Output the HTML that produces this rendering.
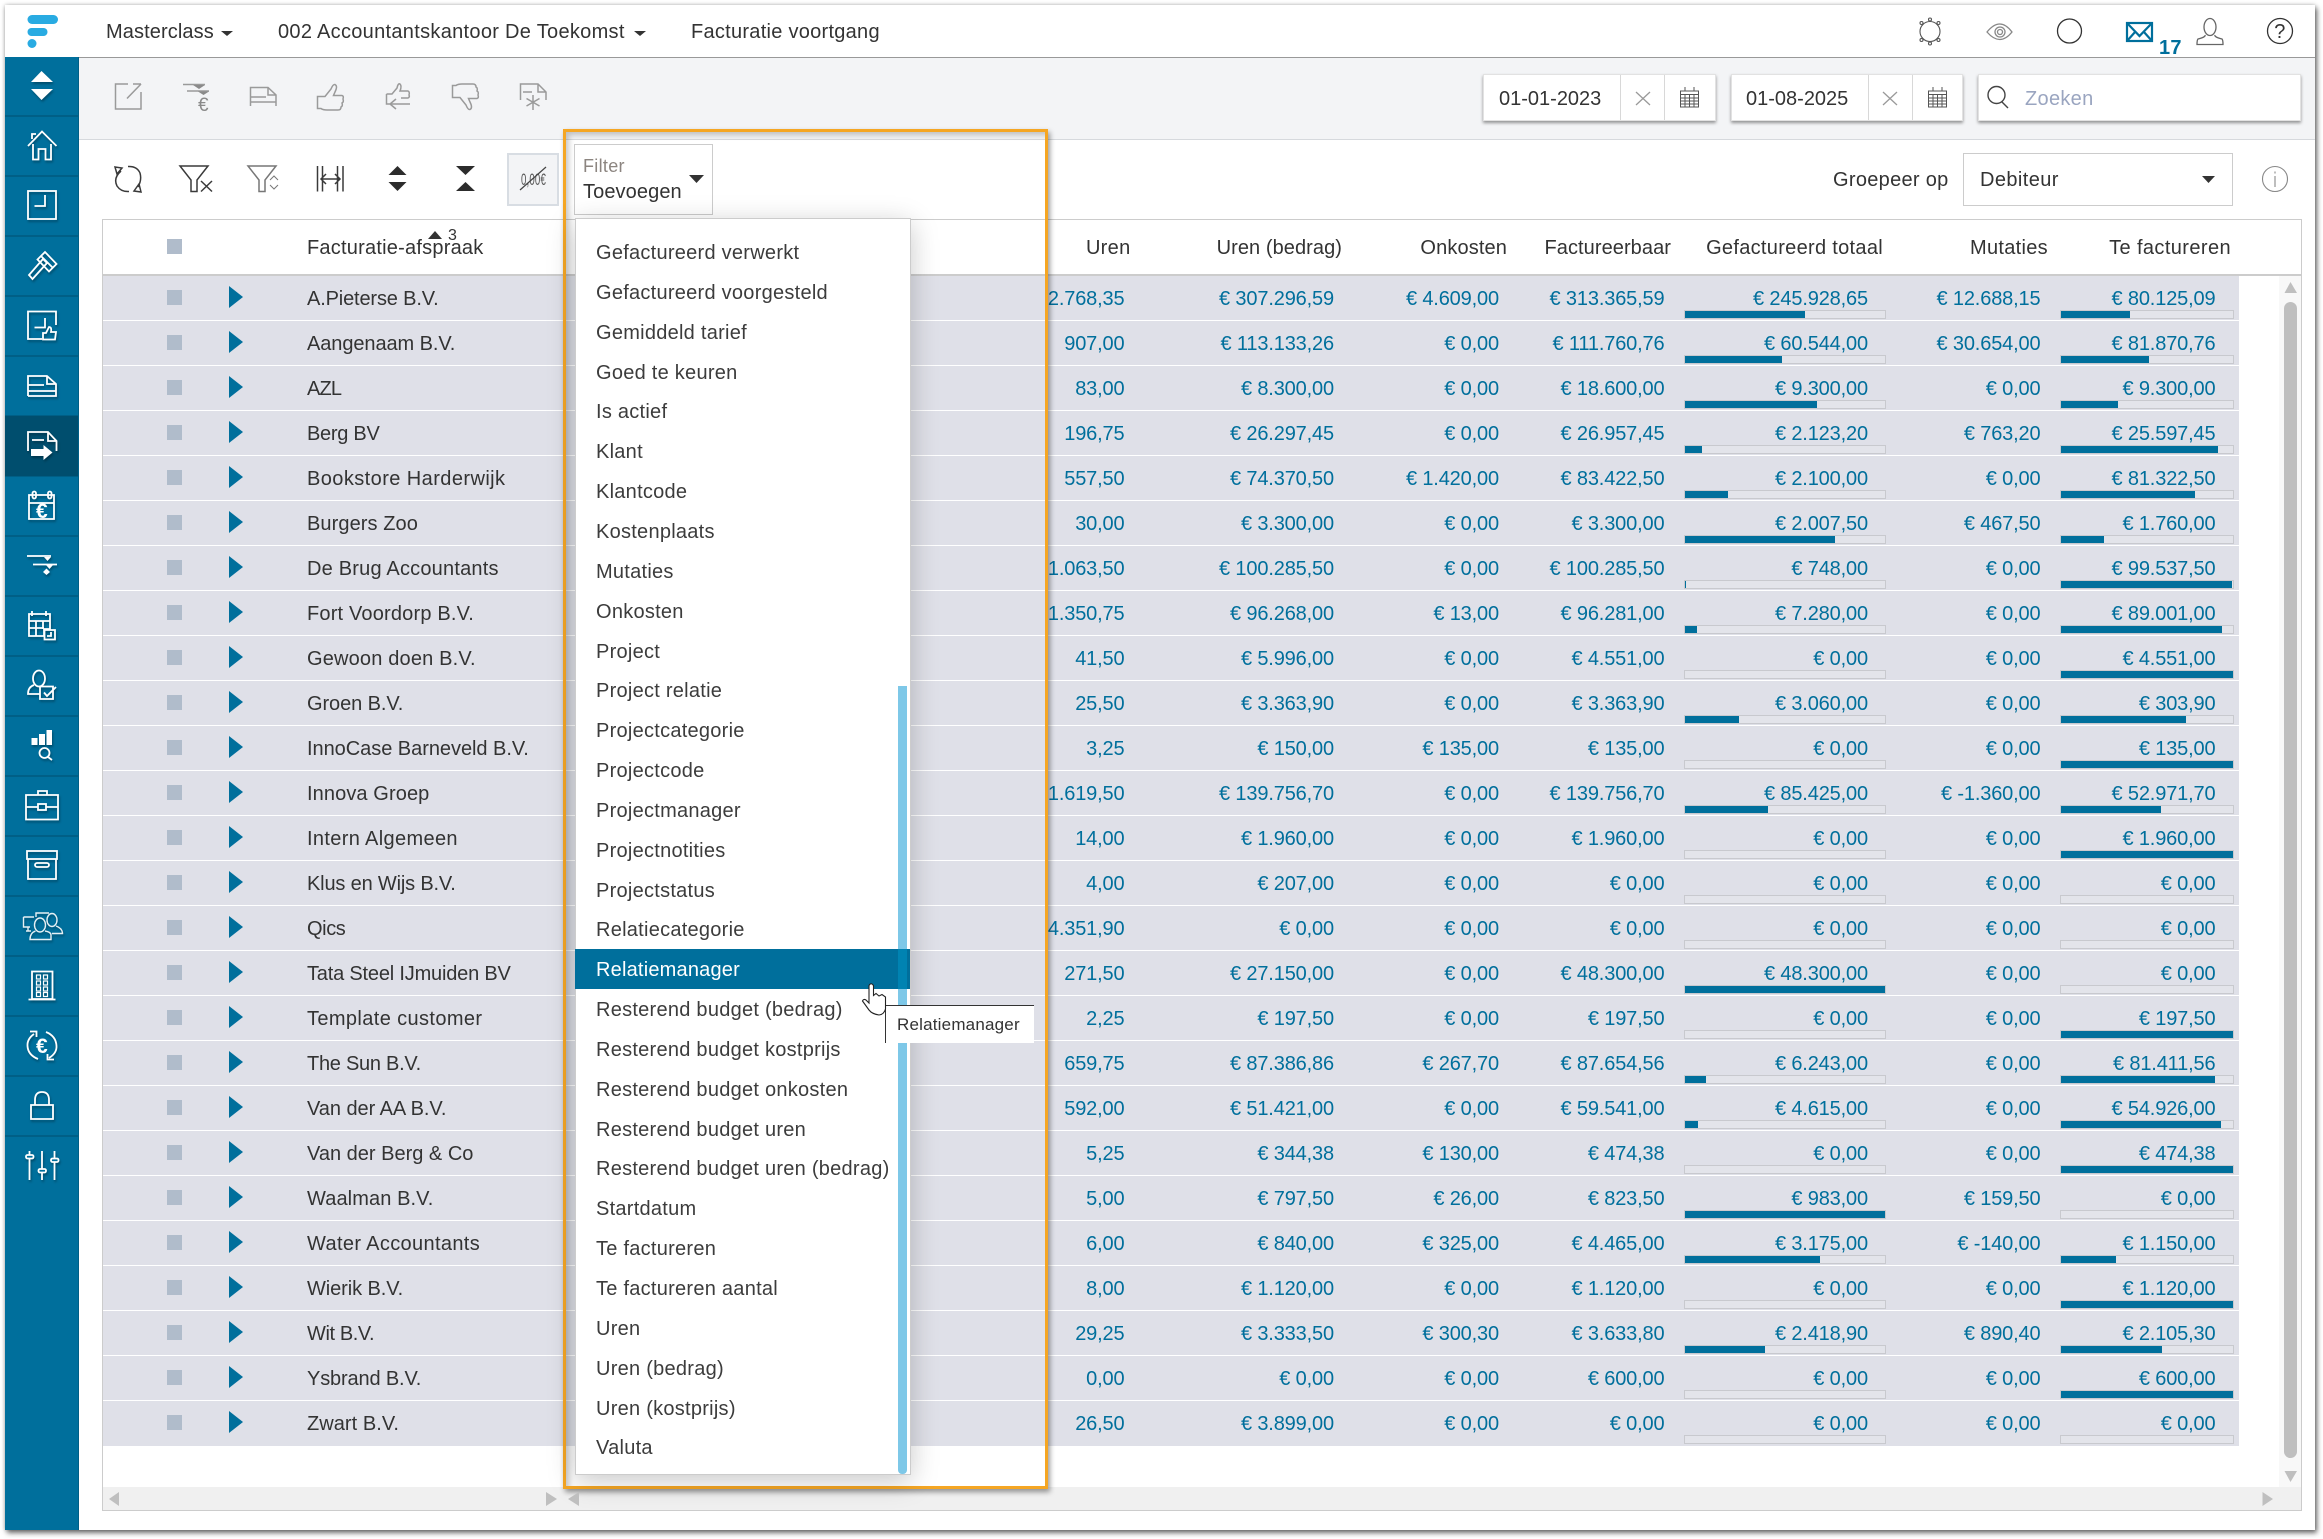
<!DOCTYPE html>
<html><head><meta charset="utf-8"><title>Facturatie voortgang</title>
<style>
*{box-sizing:border-box}
html,body{margin:0;padding:0;width:2323px;height:1539px;background:#fff;overflow:hidden;font:20px/24px "Liberation Sans",sans-serif;color:#333;letter-spacing:.3px}
.x{position:absolute;white-space:nowrap}
#win{position:absolute;left:5px;top:5px;width:2310px;height:1525px;background:#fff;box-shadow:2px 3px 5px rgba(0,0,0,.55),0 0 4px rgba(0,0,0,.25)}
#side{position:absolute;left:5px;top:57px;width:74px;height:1473px;background:#006f9c;border-right:1px solid #005f86}
#side i{position:absolute;left:0;width:73px;height:2px;background:#005f86}
#act{position:absolute;left:5px;top:416px;width:73px;height:60px;background:#004e6e}
#tb{position:absolute;left:79px;top:57px;width:2236px;height:83px;background:#f3f4f6;border-top:1px solid #999;border-bottom:1px solid #d6d9dd}
.inp{position:absolute;top:74px;height:47px;background:#fff;border:1px solid #e2e2e2;box-shadow:0 2px 3px rgba(0,0,0,.4)}
.inp i{position:absolute;top:0;width:1px;height:45px;background:#d8d8d8}
#tbl{position:absolute;left:102px;top:219px;width:2200px;height:1292px;border:1.5px solid #ccc;background:#fff}
#hl{position:absolute;left:103px;top:274px;width:2198px;height:2px;background:#ccc}
.h{position:absolute;top:236px;white-space:nowrap}
.r{position:absolute;left:103px;width:2136px;height:45px;background:#dfe0e8;border-bottom:1px solid #fff;color:#006f9c;letter-spacing:-.15px}
.r>span{position:absolute;top:10.5px;white-space:nowrap}
.c{position:absolute;left:64px;top:14px;width:15px;height:15px;background:#b0bccb}
.p{position:absolute;left:126px;top:10px;width:0;height:0;border-left:14px solid #006f9c;border-top:11.5px solid transparent;border-bottom:11.5px solid transparent}
.r>.n{left:204px;color:#333;letter-spacing:.35px}
.r>.u{left:944px;width:77.5px;display:flex;justify-content:flex-end;overflow:hidden}
.r>.b{right:905px}.r>.o{right:740px}.r>.f{right:574.5px}.r>.g{right:371px}.r>.m{right:198.5px}.r>.t{right:23.5px}
.bg,.bt{position:absolute;top:34px;height:9px;border:1px solid #c8c9ce;background:#e3e4ea}
.bg{left:1581px;width:202px}.bt{left:1957px;width:174px}
.bg div,.bt div{height:100%;background:#006f9c}
#vs{position:absolute;left:2279px;top:276px;width:22px;height:1211px;background:#f8f8f8}
#hs{position:absolute;left:103px;top:1487px;width:2198px;height:23px;background:#f0f0f0}
#frame{position:absolute;left:563px;top:129px;width:485px;height:1360px;border:3px solid #f5a623;box-shadow:2px 3px 5px rgba(0,0,0,.4),inset 5px 5px 6px -2px rgba(0,0,0,.22)}
#filt{position:absolute;left:574px;top:144px;width:139px;height:71px;border:1.5px solid #ccc;background:#fff}
#dd{position:absolute;left:575px;top:218px;width:336px;height:1257px;background:#fff;border:1.5px solid #ccc;box-shadow:0 6px 26px rgba(0,0,0,.22)}
#dd div{position:absolute;left:20px;white-space:nowrap;letter-spacing:.26px;color:#3c3c3c}
#sel{position:absolute;left:575px;top:949px;width:335px;height:40px;background:#006f9c}
#sel b{position:absolute;left:323px;top:0;width:9px;height:40px;background:#0083b2}
#sel span{position:absolute;left:21px;top:9px;color:#fff;letter-spacing:.2px}
#sb{position:absolute;left:898px;top:686px;width:9px;height:788px;background:#7ec8e8;border-radius:0 0 4px 4px}
#tip{position:absolute;left:885px;top:1005px;width:149px;height:38px;background:#fff;border-top:1.5px solid #333;border-left:1.5px solid #333;font-size:17px;letter-spacing:.2px;padding:7px 0 0 11px}
svg{position:absolute;left:0;top:0}
</style></head><body>
<div id="win"></div>
<div id="tb"></div>
<div class="x" style="left:106px;top:20px;letter-spacing:.1px">Masterclass</div>
<div class="x" style="left:278px;top:20px">002 Accountantskantoor De Toekomst</div>
<div class="x" style="left:691px;top:20px;letter-spacing:.27px">Facturatie voortgang</div>

<div class="inp" style="left:1483px;width:233px"><i style="left:136px"></i><i style="left:180px"></i></div>
<div class="x" style="left:1499px;top:87px;letter-spacing:0">01-01-2023</div>
<div class="inp" style="left:1731px;width:232px"><i style="left:136px"></i><i style="left:180px"></i></div>
<div class="x" style="left:1746px;top:87px;letter-spacing:0">01-08-2025</div>
<div class="inp" style="left:1978px;width:323px"></div>
<div class="x" style="left:2025px;top:87px;color:#9aa5c0">Zoeken</div>

<div class="x" style="left:1833px;top:168px">Groepeer op</div>
<div class="x" style="left:1963px;top:153px;width:270px;height:53px;border:1.5px solid #ccc;background:#fff"></div>
<div class="x" style="left:1980px;top:168px;letter-spacing:.4px">Debiteur</div>
<div class="x" style="left:507px;top:153px;width:52px;height:53px;background:#f3f4f6;border:2px solid #d8dde3"></div>

<div id="tbl"></div><div id="hl"></div>
<div class="c" style="left:167px;top:239px"></div>
<div class="h" style="left:307px;letter-spacing:.22px">Facturatie-afspraak</div>
<div class="h" style="right:1192.500px">Uren</div>
<div class="h" style="right:981px;letter-spacing:.07px">Uren (bedrag)</div>
<div class="h" style="right:816px;letter-spacing:.12px">Onkosten</div>
<div class="h" style="right:652px;letter-spacing:.07px">Factureerbaar</div>
<div class="h" style="right:440px">Gefactureerd totaal</div>
<div class="h" style="right:275px">Mutaties</div>
<div class="h" style="right:92px;letter-spacing:.4px">Te factureren</div>
<div class="x" style="left:448px;top:228px;font-size:16px;line-height:16px">3</div>

<div class="r" style="top:276px"><i class="c"></i><i class="p"></i><span class="n" style="letter-spacing:-.15px">A.Pieterse B.V.</span><span class="u">2.768,35</span><span class="b">€ 307.296,59</span><span class="o">€ 4.609,00</span><span class="f">€ 313.365,59</span><span class="g">€ 245.928,65</span><span class="m">€ 12.688,15</span><span class="t">€ 80.125,09</span><div class="bg"><div style="width:60%"></div></div><div class="bt"><div style="width:40%"></div></div></div>
<div class="r" style="top:321px"><i class="c"></i><i class="p"></i><span class="n" style="letter-spacing:-.08px">Aangenaam B.V.</span><span class="u">907,00</span><span class="b">€ 113.133,26</span><span class="o">€ 0,00</span><span class="f">€ 111.760,76</span><span class="g">€ 60.544,00</span><span class="m">€ 30.654,00</span><span class="t">€ 81.870,76</span><div class="bg"><div style="width:48.5%"></div></div><div class="bt"><div style="width:51%"></div></div></div>
<div class="r" style="top:366px"><i class="c"></i><i class="p"></i><span class="n" style="letter-spacing:-.85px">AZL</span><span class="u">83,00</span><span class="b">€ 8.300,00</span><span class="o">€ 0,00</span><span class="f">€ 18.600,00</span><span class="g">€ 9.300,00</span><span class="m">€ 0,00</span><span class="t">€ 9.300,00</span><div class="bg"><div style="width:66%"></div></div><div class="bt"><div style="width:33%"></div></div></div>
<div class="r" style="top:411px"><i class="c"></i><i class="p"></i><span class="n" style="letter-spacing:-.28px">Berg BV</span><span class="u">196,75</span><span class="b">€ 26.297,45</span><span class="o">€ 0,00</span><span class="f">€ 26.957,45</span><span class="g">€ 2.123,20</span><span class="m">€ 763,20</span><span class="t">€ 25.597,45</span><div class="bg"><div style="width:8.7%"></div></div><div class="bt"><div style="width:91%"></div></div></div>
<div class="r" style="top:456px"><i class="c"></i><i class="p"></i><span class="n" style="letter-spacing:.42px">Bookstore Harderwijk</span><span class="u">557,50</span><span class="b">€ 74.370,50</span><span class="o">€ 1.420,00</span><span class="f">€ 83.422,50</span><span class="g">€ 2.100,00</span><span class="m">€ 0,00</span><span class="t">€ 81.322,50</span><div class="bg"><div style="width:21.7%"></div></div><div class="bt"><div style="width:78%"></div></div></div>
<div class="r" style="top:501px"><i class="c"></i><i class="p"></i><span class="n" style="letter-spacing:.08px">Burgers Zoo</span><span class="u">30,00</span><span class="b">€ 3.300,00</span><span class="o">€ 0,00</span><span class="f">€ 3.300,00</span><span class="g">€ 2.007,50</span><span class="m">€ 467,50</span><span class="t">€ 1.760,00</span><div class="bg"><div style="width:75%"></div></div><div class="bt"><div style="width:25%"></div></div></div>
<div class="r" style="top:546px"><i class="c"></i><i class="p"></i><span class="n" style="letter-spacing:.2px">De Brug Accountants</span><span class="u">1.063,50</span><span class="b">€ 100.285,50</span><span class="o">€ 0,00</span><span class="f">€ 100.285,50</span><span class="g">€ 748,00</span><span class="m">€ 0,00</span><span class="t">€ 99.537,50</span><div class="bg"><div style="width:.5%"></div></div><div class="bt"><div style="width:99.4%"></div></div></div>
<div class="r" style="top:591px"><i class="c"></i><i class="p"></i><span class="n" style="letter-spacing:.18px">Fort Voordorp B.V.</span><span class="u">1.350,75</span><span class="b">€ 96.268,00</span><span class="o">€ 13,00</span><span class="f">€ 96.281,00</span><span class="g">€ 7.280,00</span><span class="m">€ 0,00</span><span class="t">€ 89.001,00</span><div class="bg"><div style="width:6%"></div></div><div class="bt"><div style="width:93.5%"></div></div></div>
<div class="r" style="top:636px"><i class="c"></i><i class="p"></i><span class="n" style="letter-spacing:.17px">Gewoon doen B.V.</span><span class="u">41,50</span><span class="b">€ 5.996,00</span><span class="o">€ 0,00</span><span class="f">€ 4.551,00</span><span class="g">€ 0,00</span><span class="m">€ 0,00</span><span class="t">€ 4.551,00</span><div class="bg"></div><div class="bt"><div style="width:100%"></div></div></div>
<div class="r" style="top:681px"><i class="c"></i><i class="p"></i><span class="n" style="letter-spacing:-.09px">Groen B.V.</span><span class="u">25,50</span><span class="b">€ 3.363,90</span><span class="o">€ 0,00</span><span class="f">€ 3.363,90</span><span class="g">€ 3.060,00</span><span class="m">€ 0,00</span><span class="t">€ 303,90</span><div class="bg"><div style="width:27%"></div></div><div class="bt"><div style="width:72.7%"></div></div></div>
<div class="r" style="top:726px"><i class="c"></i><i class="p"></i><span class="n" style="letter-spacing:-.04px">InnoCase Barneveld B.V.</span><span class="u">3,25</span><span class="b">€ 150,00</span><span class="o">€ 135,00</span><span class="f">€ 135,00</span><span class="g">€ 0,00</span><span class="m">€ 0,00</span><span class="t">€ 135,00</span><div class="bg"></div><div class="bt"><div style="width:100%"></div></div></div>
<div class="r" style="top:771px"><i class="c"></i><i class="p"></i><span class="n" style="letter-spacing:.1px">Innova Groep</span><span class="u">1.619,50</span><span class="b">€ 139.756,70</span><span class="o">€ 0,00</span><span class="f">€ 139.756,70</span><span class="g">€ 85.425,00</span><span class="m">€ -1.360,00</span><span class="t">€ 52.971,70</span><div class="bg"><div style="width:41.5%"></div></div><div class="bt"><div style="width:58%"></div></div></div>
<div class="r" style="top:816px"><i class="c"></i><i class="p"></i><span class="n">Intern Algemeen</span><span class="u">14,00</span><span class="b">€ 1.960,00</span><span class="o">€ 0,00</span><span class="f">€ 1.960,00</span><span class="g">€ 0,00</span><span class="m">€ 0,00</span><span class="t">€ 1.960,00</span><div class="bg"></div><div class="bt"><div style="width:100%"></div></div></div>
<div class="r" style="top:861px"><i class="c"></i><i class="p"></i><span class="n" style="letter-spacing:-.17px">Klus en Wijs B.V.</span><span class="u">4,00</span><span class="b">€ 207,00</span><span class="o">€ 0,00</span><span class="f">€ 0,00</span><span class="g">€ 0,00</span><span class="m">€ 0,00</span><span class="t">€ 0,00</span><div class="bg"></div><div class="bt"></div></div>
<div class="r" style="top:906px"><i class="c"></i><i class="p"></i><span class="n" style="letter-spacing:-.4px">Qics</span><span class="u">4.351,90</span><span class="b">€ 0,00</span><span class="o">€ 0,00</span><span class="f">€ 0,00</span><span class="g">€ 0,00</span><span class="m">€ 0,00</span><span class="t">€ 0,00</span><div class="bg"></div><div class="bt"></div></div>
<div class="r" style="top:951px"><i class="c"></i><i class="p"></i><span class="n" style="letter-spacing:-.19px">Tata Steel IJmuiden BV</span><span class="u">271,50</span><span class="b">€ 27.150,00</span><span class="o">€ 0,00</span><span class="f">€ 48.300,00</span><span class="g">€ 48.300,00</span><span class="m">€ 0,00</span><span class="t">€ 0,00</span><div class="bg"><div style="width:100%"></div></div><div class="bt"></div></div>
<div class="r" style="top:996px"><i class="c"></i><i class="p"></i><span class="n" style="letter-spacing:.38px">Template customer</span><span class="u">2,25</span><span class="b">€ 197,50</span><span class="o">€ 0,00</span><span class="f">€ 197,50</span><span class="g">€ 0,00</span><span class="m">€ 0,00</span><span class="t">€ 197,50</span><div class="bg"></div><div class="bt"><div style="width:100%"></div></div></div>
<div class="r" style="top:1041px"><i class="c"></i><i class="p"></i><span class="n" style="letter-spacing:-.27px">The Sun B.V.</span><span class="u">659,75</span><span class="b">€ 87.386,86</span><span class="o">€ 267,70</span><span class="f">€ 87.654,56</span><span class="g">€ 6.243,00</span><span class="m">€ 0,00</span><span class="t">€ 81.411,56</span><div class="bg"><div style="width:10.4%"></div></div><div class="bt"><div style="width:89.5%"></div></div></div>
<div class="r" style="top:1086px"><i class="c"></i><i class="p"></i><span class="n" style="letter-spacing:-.05px">Van der AA B.V.</span><span class="u">592,00</span><span class="b">€ 51.421,00</span><span class="o">€ 0,00</span><span class="f">€ 59.541,00</span><span class="g">€ 4.615,00</span><span class="m">€ 0,00</span><span class="t">€ 54.926,00</span><div class="bg"><div style="width:6.5%"></div></div><div class="bt"><div style="width:93%"></div></div></div>
<div class="r" style="top:1131px"><i class="c"></i><i class="p"></i><span class="n" style="letter-spacing:0">Van der Berg &amp; Co</span><span class="u">5,25</span><span class="b">€ 344,38</span><span class="o">€ 130,00</span><span class="f">€ 474,38</span><span class="g">€ 0,00</span><span class="m">€ 0,00</span><span class="t">€ 474,38</span><div class="bg"></div><div class="bt"><div style="width:100%"></div></div></div>
<div class="r" style="top:1176px"><i class="c"></i><i class="p"></i><span class="n" style="letter-spacing:.1px">Waalman B.V.</span><span class="u">5,00</span><span class="b">€ 797,50</span><span class="o">€ 26,00</span><span class="f">€ 823,50</span><span class="g">€ 983,00</span><span class="m">€ 159,50</span><span class="t">€ 0,00</span><div class="bg"><div style="width:100%"></div></div><div class="bt"></div></div>
<div class="r" style="top:1221px"><i class="c"></i><i class="p"></i><span class="n">Water Accountants</span><span class="u">6,00</span><span class="b">€ 840,00</span><span class="o">€ 325,00</span><span class="f">€ 4.465,00</span><span class="g">€ 3.175,00</span><span class="m">€ -140,00</span><span class="t">€ 1.150,00</span><div class="bg"><div style="width:67.6%"></div></div><div class="bt"><div style="width:32%"></div></div></div>
<div class="r" style="top:1266px"><i class="c"></i><i class="p"></i><span class="n" style="letter-spacing:-.09px">Wierik B.V.</span><span class="u">8,00</span><span class="b">€ 1.120,00</span><span class="o">€ 0,00</span><span class="f">€ 1.120,00</span><span class="g">€ 0,00</span><span class="m">€ 0,00</span><span class="t">€ 1.120,00</span><div class="bg"></div><div class="bt"><div style="width:100%"></div></div></div>
<div class="r" style="top:1311px"><i class="c"></i><i class="p"></i><span class="n" style="letter-spacing:-.4px">Wit B.V.</span><span class="u">29,25</span><span class="b">€ 3.333,50</span><span class="o">€ 300,30</span><span class="f">€ 3.633,80</span><span class="g">€ 2.418,90</span><span class="m">€ 890,40</span><span class="t">€ 2.105,30</span><div class="bg"><div style="width:40%"></div></div><div class="bt"><div style="width:59%"></div></div></div>
<div class="r" style="top:1356px"><i class="c"></i><i class="p"></i><span class="n" style="letter-spacing:-.15px">Ysbrand B.V.</span><span class="u">0,00</span><span class="b">€ 0,00</span><span class="o">€ 0,00</span><span class="f">€ 600,00</span><span class="g">€ 0,00</span><span class="m">€ 0,00</span><span class="t">€ 600,00</span><div class="bg"></div><div class="bt"><div style="width:100%"></div></div></div>
<div class="r" style="top:1401px;border-bottom:0"><i class="c"></i><i class="p"></i><span class="n" style="letter-spacing:.05px">Zwart B.V.</span><span class="u">26,50</span><span class="b">€ 3.899,00</span><span class="o">€ 0,00</span><span class="f">€ 0,00</span><span class="g">€ 0,00</span><span class="m">€ 0,00</span><span class="t">€ 0,00</span><div class="bg"></div><div class="bt"></div></div>

<div id="vs"></div>
<div class="x" style="left:2284px;top:302px;width:13px;height:1156px;background:#bfbfbf;border-radius:7px"></div>
<div id="hs"></div>

<div id="side">
<i style="top:58px"></i><i style="top:118px"></i><i style="top:178px"></i><i style="top:238px"></i><i style="top:298px"></i><i style="top:358px"></i><i style="top:418px"></i><i style="top:478px"></i><i style="top:538px"></i><i style="top:598px"></i><i style="top:658px"></i><i style="top:718px"></i><i style="top:778px"></i><i style="top:838px"></i><i style="top:898px"></i><i style="top:958px"></i><i style="top:1018px"></i><i style="top:1078px"></i>
</div>
<div id="act"></div>

<div id="frame"></div>
<div id="filt"></div>
<div class="x" style="left:583px;top:154px;font-size:18px;color:#8c8580">Filter</div>
<div class="x" style="left:583px;top:180px;letter-spacing:.1px">Toevoegen</div>
<div id="dd">
<div style="top:22px">Gefactureerd verwerkt</div>
<div style="top:62px">Gefactureerd voorgesteld</div>
<div style="top:102px">Gemiddeld tarief</div>
<div style="top:142px">Goed te keuren</div>
<div style="top:181px">Is actief</div>
<div style="top:221px">Klant</div>
<div style="top:261px">Klantcode</div>
<div style="top:301px">Kostenplaats</div>
<div style="top:341px">Mutaties</div>
<div style="top:381px">Onkosten</div>
<div style="top:421px">Project</div>
<div style="top:460px">Project relatie</div>
<div style="top:500px">Projectcategorie</div>
<div style="top:540px">Projectcode</div>
<div style="top:580px">Projectmanager</div>
<div style="top:620px">Projectnotities</div>
<div style="top:660px">Projectstatus</div>
<div style="top:699px">Relatiecategorie</div>
<div style="top:779px">Resterend budget (bedrag)</div>
<div style="top:819px">Resterend budget kostprijs</div>
<div style="top:859px">Resterend budget onkosten</div>
<div style="top:899px">Resterend budget uren</div>
<div style="top:938px">Resterend budget uren (bedrag)</div>
<div style="top:978px">Startdatum</div>
<div style="top:1018px">Te factureren</div>
<div style="top:1058px">Te factureren aantal</div>
<div style="top:1098px">Uren</div>
<div style="top:1138px">Uren (bedrag)</div>
<div style="top:1178px">Uren (kostprijs)</div>
<div style="top:1217px">Valuta</div>
</div>
<div id="sb"></div>
<div id="sel"><b></b><span>Relatiemanager</span></div>
<div id="tip">Relatiemanager</div>

<svg width="2323" height="1539" viewBox="0 0 2323 1539" xmlns="http://www.w3.org/2000/svg" font-family="Liberation Sans, sans-serif">
<!-- logo -->
<g fill="#29abe2"><rect x="27.5" y="15" width="30.5" height="9" rx="4.5"/><rect x="27.5" y="28" width="20" height="8" rx="4"/><rect x="27.5" y="39" width="9" height="9" rx="4.5"/></g>
<!-- carets -->
<g fill="#333"><path d="M221 31H233L227 36Z"/><path d="M634 31H646L640 36Z"/><path d="M689 175H704L696.5 183Z"/><path d="M2202 176H2215L2208.5 183Z"/><path d="M428 239H442L435 231Z"/></g>
<!-- top right -->
<g fill="none" stroke="#555" stroke-width="1.1">
<circle cx="1930" cy="31.5" r="10"/><g fill="#fff"><circle cx="1930" cy="19.5" r="1.5"/><circle cx="1930" cy="43.5" r="1.5"/><circle cx="1921.5" cy="23" r="1.5"/><circle cx="1938.5" cy="23" r="1.5"/><circle cx="1921.5" cy="40" r="1.5"/><circle cx="1938.5" cy="40" r="1.5"/></g>
<g stroke="#888" stroke-width="1.3"><path d="M1987 32Q2000 16 2012 32Q2000 47 1987 32Z"/><circle cx="2000" cy="32" r="5"/><circle cx="2000" cy="32" r="2.5"/></g>
<circle cx="2069.5" cy="31" r="12" stroke="#333" stroke-width="1.3"/>
<g stroke="#006f9c" stroke-width="2.2"><rect x="2127" y="23" width="25" height="18"/><path d="M2127 23L2139.5 36L2152 23M2127 41L2135.5 31.500M2152 41L2143.500 31.500"/></g>
<g stroke="#666" stroke-width="1.3"><ellipse cx="2210" cy="27" rx="6" ry="8.5"/><path d="M2205 35Q2206 37 2198 39Q2197 40 2197 44.500H2223Q2223 40 2222 39Q2214 37 2215 35"/></g>
<circle cx="2280" cy="31" r="12.500" stroke="#333" stroke-width="1.3"/>
<circle cx="2275" cy="179" r="12.500" stroke="#888"/><path d="M2275 176V187M2275 171.500V173.500" stroke="#888"/>
</g>
<text x="2159" y="54" font-size="20" font-weight="bold" fill="#006f9c">17</text>
<text x="2280" y="38" font-size="20" fill="#333" text-anchor="middle">?</text>
<!-- date icons -->
<g fill="none" stroke="#9a9a9a" stroke-width="1.3"><path d="M1636 92L1650 105M1650 92L1636 105M1883 92L1897 105M1897 92L1883 105"/></g>
<g fill="none" stroke="#555" stroke-width="1">
<path d="M1680.500 91H1698.500V107H1680.500ZM1680.500 94.500H1698.500M1680.500 98H1698.500M1680.500 101H1698.500M1680.500 104H1698.500M1685 94.500V107M1689.500 94.500V107M1694 94.500V107M1685 87V91M1694 87V91"/>
<path d="M1928.500 91H1946.500V107H1928.500ZM1928.500 94.500H1946.500M1928.500 98H1946.500M1928.500 101H1946.500M1928.500 104H1946.500M1933 94.500V107M1937.500 94.500V107M1942 94.500V107M1933 87V91M1942 87V91"/>
</g>
<g fill="none" stroke="#444" stroke-width="1.4"><circle cx="1996.500" cy="95" r="8.500"/><path d="M2002 102L2008 108"/></g>
<!-- toolbar 1 -->
<g fill="none" stroke="#9a9a9a" stroke-width="1.500">
<path d="M128 84H115.500V109H141V92M141 84L127 98.500M133 84H141"/>
<path d="M183 84.500H205M187 91H209"/><path d="M193 85L199 89L205 85Z M198 91.500L203.500 95L209 91.500Z" fill="#8a8a8a" stroke="none"/>
<path d="M250.500 106V87.500H268L276 95V106M268 87.500V95H276M250.500 97H266M250.500 102H276"/>
<path id="t" d="M317.500 96.500H325L331 89Q333 84 335 84.500Q338 86 335 92L333.500 95.500H342Q344 96 343 99Q344 102 342 103Q343 106 341 107Q341 110 338 110H327Q323 110 321 108.500H317.500Z"/>
<path d="M386.500 94H392L397 88Q398 83 400 84Q402 86 400 91H408Q410 92 409 95Q410 97 408 98H401M386.500 94V104H391M410 104H390M396 99L390 104L396 109"/>
<path d="M317.500 96.500H325L331 89Q333 84 335 84.500Q338 86 335 92L333.500 95.500H342Q344 96 343 99Q344 102 342 103Q343 106 341 107Q341 110 338 110H327Q323 110 321 108.500H317.500Z" transform="translate(135,194) scale(1,-1)"/>
<path d="M520.500 100V84H538L546 92V100M538 84V92H546M523 92H532M533 95V110M526.500 98.500L539.500 106M539.500 98.500L526.500 106"/>
</g>
<text x="198" y="111" font-size="19" fill="#8a8a8a">€</text>
<!-- toolbar 2 -->
<g fill="none" stroke="#3a3a3a" stroke-width="1.500">
<path d="M121 171Q113 178 117 186Q121 192 129 191.500M128 166.500Q137 166 140 173Q142 180 138 187"/>
<path d="M115 167L122 168L117 174ZM141 192L134 191L139 184Z"/>
<path d="M180 166H208L197 180V191.500H191V180ZM201 181L212 191.500M212 181L201 191.500"/>
<g stroke="#777"><path d="M248 166H276L265 180V191.500H259V180Z"/><path d="M270 180L274 176L278 180M270 185L274 189L278 185" stroke-width="1"/></g>
<path d="M317.500 166V191.500M322.500 166V191.500M337.500 166V191.500M343 166V191.500M321 179H340M326 174L321 179L326 184M335 174L340 179L335 184"/>
</g>
<g fill="#2c2c2c"><path d="M397.500 166L388.500 175H406.500ZM388.500 182H406.500L397.500 191ZM456 166H475L465.500 175ZM465.500 182L456 191H475Z"/></g>
<text x="521" y="185" font-size="17" fill="#555" textLength="25" lengthAdjust="spacingAndGlyphs">0,00€</text>
<path d="M520 190L546 167" stroke="#444" stroke-width="1.200"/>
<!-- sidebar -->
<g fill="none" stroke="#fff" stroke-width="1.800" style="filter:drop-shadow(1px 2px 1px rgba(0,0,0,.3))">
<path d="M41.500 71L31 82H53ZM31 89H53L41.500 100Z" fill="#fff" stroke="none"/>
<path d="M28 146L42 131.500L56.500 146M33 144V159.500H38.500V149H45.500V159.500H51V144M32 139V134H36"/>
<rect x="28" y="191" width="28" height="28"/><path d="M45 195V206H34.500"/>
<path d="M29 275L32.500 279L47 263L43 259ZM37.500 259.500L45 252L56.500 264L49 271.500ZM41 256L53 268"/>
<path d="M56 325V311.500H28V339H42M45 318V327.500H34.500M43 339.500V333H46L49 327Q52 327 51 332H56L55 339.500Z"/>
<path d="M28 396V376H47L56 384V396H28M47 376V384H56M28 385H44M28 391H56"/>
<path d="M28 451V432H48L56.500 441V451M48 432V441H56.500M32 440H44"/>
<path d="M31 449H43.500V445L52.500 452.500L43.500 460V456H31Z" fill="#fff" stroke="none"/>
<path d="M29 495H54V519H29ZM29 503H54" /><rect x="32.500" y="491.500" width="3.500" height="7" rx="1.700"/><rect x="48" y="491.500" width="3.500" height="7" rx="1.700"/>
<path d="M27 556H51M33 564.500H57"/><path d="M44 557H51L47.500 561ZM46 565H53L49.500 569ZM46.500 568.500L50 572L46.500 575L43 572Z" fill="#fff" stroke="none"/>
<path d="M29 614H50V629H44V636H29ZM29 621H50M29 628H44M36 621V636M43 621V629M32 611V616M46 611V616M44.500 630H55V639.500H44.500ZM51 632V636H47"/>
<ellipse cx="39" cy="678.500" rx="6" ry="8"/><path d="M34 685Q28 687 28 694H40M40 686.500H53V699H40ZM44 692.500L47 696L56 687"/>
<path d="M31.500 738H37.500V745H31.500ZM39 734H45V745H39ZM46.500 730H52V745H46.500Z" fill="#fff" stroke="none"/>
<circle cx="44.500" cy="753" r="5"/><path d="M48 757L52 760"/>
<path d="M26 795H58V819.500H26ZM26 807H38M46 807H58M38 795V791H47V795"/><rect x="38" y="804" width="8" height="6"/>
<rect x="27" y="851" width="30" height="8"/><path d="M28 859V879H56V859"/><rect x="35" y="863" width="14" height="4" rx="2"/>
<g stroke-width="1.400" opacity=".9"><path d="M23.500 917H34M23.500 917V927H30M28 927V931M26 931H31M36 917V913H49"/><ellipse cx="40" cy="925" rx="5.500" ry="7"/><path d="M35.500 931Q30 933 30 939.500H51V935Q51 932 45 931"/><ellipse cx="52" cy="920" rx="5" ry="6.500"/><path d="M56 926Q62 928 62.500 933V933.500H52"/></g>
<path d="M32 971.500H52.500V999H32ZM28.500 999.500H55.500"/><g stroke-width="1.200"><rect x="36.500" y="975" width="4" height="4"/><rect x="43.500" y="975" width="4" height="4"/><rect x="36.500" y="981" width="4" height="4"/><rect x="43.500" y="981" width="4" height="4"/><rect x="36.500" y="987" width="4" height="4"/><rect x="43.500" y="987" width="4" height="4"/><rect x="36.500" y="992.500" width="4" height="4"/><rect x="43.500" y="992.500" width="4" height="4"/></g>
<path d="M34 1034Q27 1039 27.500 1046Q28 1055 38 1059M49 1058Q57 1053 56.500 1046Q56 1036 46 1032M30 1031.500H36.500V1037M54 1059.500H47.500V1054"/>
<path d="M31 1105H53V1119H31ZM35 1105V1100Q35 1092 42 1092Q49 1092 49 1100V1105"/>
<path d="M29.500 1151V1180M42 1151V1180M54.500 1151V1180"/>
<g fill="#006f9c"><rect x="26" y="1155" width="7.500" height="3.500" rx="1.500"/><rect x="38.500" y="1169" width="7.500" height="3.500" rx="1.500"/><rect x="51" y="1158.500" width="7.500" height="3.500" rx="1.500"/></g>
</g>
<g fill="#fff" font-size="21" font-weight="bold" text-anchor="middle"><text x="42" y="518">€</text><text x="42" y="1053">€</text></g>
<!-- scroll arrows -->
<g fill="#bfbfbf"><path d="M2290.500 282L2284.500 293H2297ZM2290.500 1482L2284.500 1471H2297ZM119 1492V1506L109 1499ZM546 1492V1506L557 1499ZM579 1492V1506L568 1499ZM2262.500 1492V1506L2273 1499Z"/></g>
<!-- cursor -->
<path d="M869 1003V985.500Q871 982 873.500 985.500V995.500L876 993.500L879 996L882 994.500L885.500 997V1009Q884 1014.500 879 1015Q872 1014 869 1010L862.500 1001Q863.500 998.500 866 1000Z" fill="#fff" stroke="#222" stroke-width="1.100"/>
</svg>
</body></html>
